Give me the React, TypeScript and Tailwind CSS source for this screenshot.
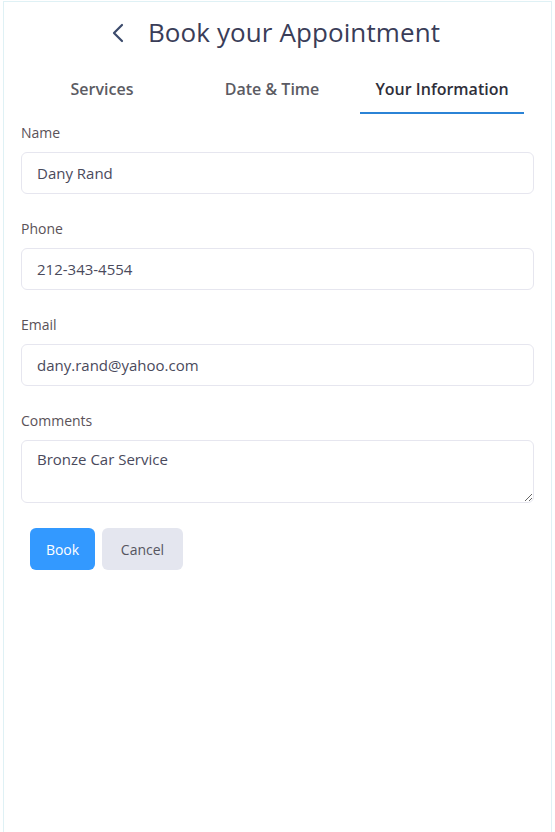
function App() {
  const fields = [
    { label: "Name", value: "Dany Rand" },
    { label: "Phone", value: "212-343-4554" },
    { label: "Email", value: "dany.rand@yahoo.com" },
  ];
  const tabs = ["Services", "Date & Time", "Your Information"];

  return (
    <div className="min-h-screen bg-white font-['Open_Sans',sans-serif]">
      <div className="mx-[3px] mt-px h-[831px] border border-b-0 border-[#dff1f5] px-[17px]">
        {/* header */}
        <div className="flex h-[58px] items-center justify-center gap-[23px] pt-[2px]">
          <svg width="14" height="22" viewBox="0 0 14 22" fill="none" className="mt-[2px] -ml-[4px]">
            <path d="M11 3 L3 11 L11 19" stroke="#3b4a6b" strokeWidth="2.2" strokeLinecap="round" strokeLinejoin="round" />
          </svg>
          <h1 className="text-[26px] tracking-[0.1px] text-[#3a3d58]">Book your Appointment</h1>
        </div>

        {/* tabs */}
        <div className="mt-[11px] -ml-[4px] grid w-[510px] grid-cols-3">
          {tabs.map((t, i) => (
            <div key={t} className="flex flex-col items-center px-[3px]">
              <div className={`pt-[6px] pb-[11px] text-[16px] font-semibold ${i === 2 ? "text-[#2f2f3a]" : "text-[#5b5b63]"}`}>{t}</div>
              <div className={`h-[2px] w-full ${i === 2 ? "bg-[#2b83d6]" : "bg-transparent"}`}></div>
            </div>
          ))}
        </div>

        {/* form */}
        <div className="mt-[9px] flex flex-col gap-[25px]">
          {fields.map((f) => (
            <div key={f.label}>
              <label className="block text-[14px] leading-[20px] text-[#5a5258]">{f.label}</label>
              <input
                readOnly
                value={f.value}
                className="mt-[9px] block h-[42px] w-full rounded-md border border-[#e6e6ef] px-[15px] text-[15px] text-[#4a4a5c] outline-none"
              />
            </div>
          ))}
          <div>
            <label className="block text-[14px] leading-[20px] text-[#5a5258]">Comments</label>
            <textarea
              readOnly
              value="Bronze Car Service"
              className="mt-[9px] block h-[63px] w-full rounded-md border border-[#e6e6ef] px-[15px] pt-[8px] text-[15px] leading-[20px] text-[#4a4a5c] outline-none"
            />
          </div>
        </div>

        <div className="mt-[25px] ml-[9px] flex gap-[7px]">
          <button className="h-[42px] w-[65px] rounded-md bg-[#3399ff] text-[14px] text-white">Book</button>
          <button className="h-[42px] w-[81px] rounded-md bg-[#e4e6ef] text-[14px] text-[#55555f]">Cancel</button>
        </div>
      </div>
    </div>
  );
}

export default App;
